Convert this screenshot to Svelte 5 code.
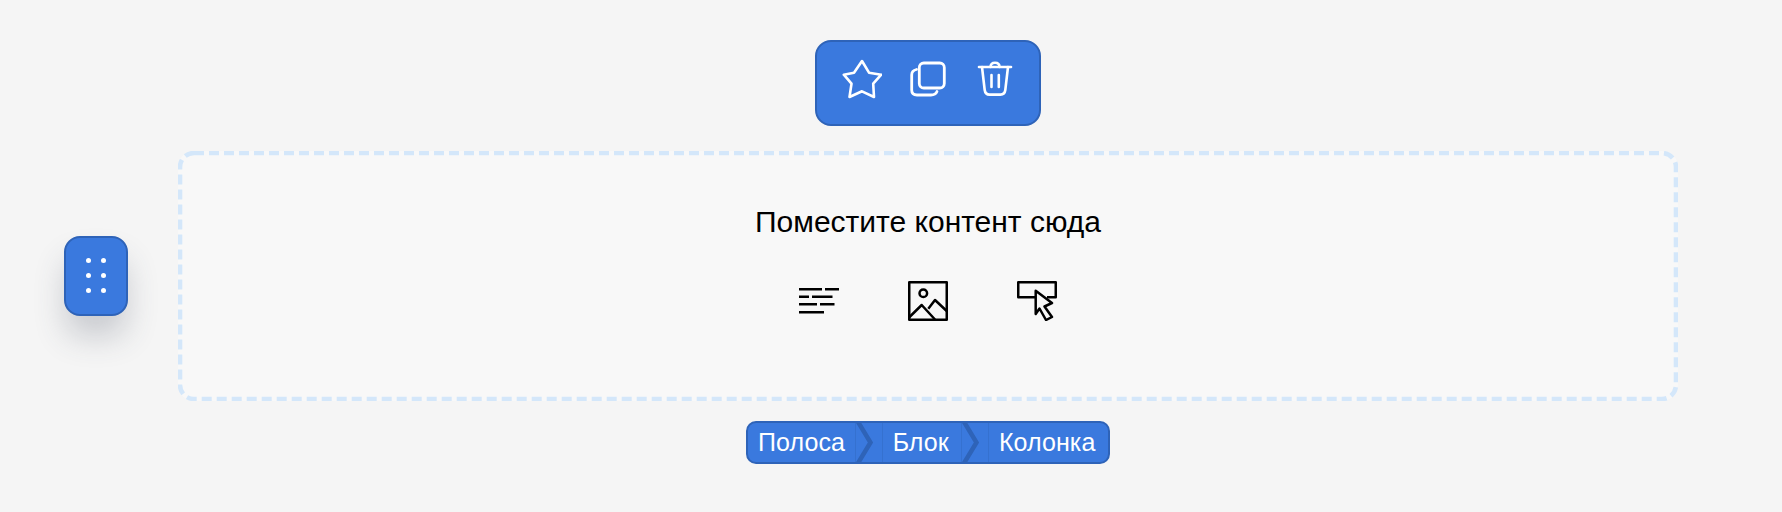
<script>
  const crumbs = ['Полоса', 'Блок', 'Колонка'];
  const dots = [
    [2.5, 2.5], [17.5, 2.5],
    [2.5, 17.5], [17.5, 17.5],
    [2.5, 32.5], [17.5, 32.5]
  ];
</script>

<div class="page">
  <button class="handle" aria-label="Переместить">
    <svg width="20" height="35" viewBox="0 0 20 35" fill="#fff">
      {#each dots as [cx, cy]}
        <circle {cx} {cy} r="2.5" />
      {/each}
    </svg>
  </button>

  <div class="main">
    <div class="toolbar">
      <svg width="40" height="40" viewBox="0 0 40 40" fill="none" stroke="#fff" stroke-width="2.6" stroke-linejoin="round" stroke-linecap="round">
        <path d="M20 2 L27 13.7 L39.2 15.7 L31.2 24.7 L32 38 L20 32.3 L7.5 38 L9.5 24.7 L1.8 15.7 L12 13.7 Z" />
      </svg>
      <svg width="40" height="40" viewBox="0 0 40 40" fill="none" stroke="#fff" stroke-width="2.8" stroke-linecap="round">
        <rect x="11.3" y="4" width="25" height="25" rx="4.5" />
        <path d="M8.5 10.5 Q3.7 11.5 3.7 16 V31 Q3.7 36 9 36 H23 Q27.5 36 29 32.5" />
      </svg>
      <svg width="40" height="40" viewBox="0 0 40 40" fill="none" stroke="#fff" stroke-width="2.6" stroke-linecap="round" stroke-linejoin="round">
        <path d="M4 8 H36" />
        <path d="M7 8 L9.7 31 Q10.3 35.6 14.5 35.6 H25.5 Q29.7 35.6 30.3 31 L33 8" />
        <path d="M15.5 8 Q15.5 3.8 20 3.8 Q24.5 3.8 24.5 8" />
        <path d="M16.5 16 V28 M23.8 16 V28" />
      </svg>
    </div>

    <div class="zone">
      <svg class="dash" width="1500" height="250" viewBox="0 0 1500 250" fill="none">
        <rect x="2" y="2" width="1496" height="246" rx="14" stroke="#d4e7fa" stroke-width="4.6" stroke-dasharray="10 5" />
      </svg>
      <div class="title">Поместите контент сюда</div>
      <div class="icons">
        <svg width="40" height="40" viewBox="0 0 40 40" fill="none" stroke="#000" stroke-width="2.5">
          <path d="M0 8.3 H23 M26 8.3 H40 M0 15.7 H10 M13 15.7 H33.5 M0 23.3 H18 M21 23.3 H35.5 M0 31.3 H25" />
        </svg>
        <svg width="40" height="40" viewBox="0 0 40 40" fill="none" stroke="#000" stroke-width="2.5" stroke-linejoin="round">
          <rect x="1.25" y="1.25" width="37.5" height="37.5" />
          <circle cx="15.3" cy="12.3" r="3.8" />
          <path d="M1 36.5 L13.7 24 L27 38.5 M20.3 27.7 L27 19 L38.7 30" />
        </svg>
        <svg width="40" height="40" viewBox="0 0 40 40" fill="none" stroke="#000" stroke-width="2.5" stroke-linejoin="round">
          <path d="M18 16.3 H1.25 V1.25 H38.75 V16.3 H30" />
          <path d="M18.7 9.7 L35 22 L27.5 25.5 L35 36 L29 39 L22.5 27.5 L18.7 33 Z" fill="#f8f8f8" />
        </svg>
      </div>
    </div>

    <nav class="crumbs">
      {#each crumbs as crumb, i}
        {#if i > 0}
          <span class="sep">
            <svg width="18" height="39" viewBox="0 0 18 39">
              <path d="M1.5 -2 L14.5 19.5 L1.5 41" fill="none" stroke="#2e63b8" stroke-width="4.5" />
            </svg>
          </span>
        {/if}
        <span class="crumb">{crumb}</span>
      {/each}
    </nav>
  </div>
</div>

<style>
  :global(body) {
    margin: 0;
    background: #f5f5f5;
  }

  .page {
    display: flex;
    align-items: flex-start;
    gap: 50px;
    height: 512px;
    padding: 40px 0 0 64px;
    box-sizing: border-box;
    font-family: "Liberation Sans", Arial, sans-serif;
  }

  .handle {
    flex: none;
    display: flex;
    align-items: center;
    justify-content: center;
    width: 64px;
    height: 80px;
    margin-top: 196px;
    padding: 0 0 2px;
    box-sizing: border-box;
    background: #3a79de;
    border: 2px solid #2e63b8;
    border-radius: 16px;
    box-shadow: 0 22px 32px -2px rgba(60, 66, 87, 0.24);
  }

  .main {
    width: 1500px;
    display: flex;
    flex-direction: column;
    align-items: center;
  }

  .toolbar {
    display: flex;
    align-items: center;
    justify-content: center;
    gap: 26.5px;
    width: 226px;
    height: 86px;
    padding-bottom: 8px;
    box-sizing: border-box;
    background: #3a79de;
    border: 2px solid #2e63b8;
    border-radius: 16px;
  }

  .zone {
    position: relative;
    width: 100%;
    height: 250px;
    margin-top: 25px;
    box-sizing: border-box;
    background: #f8f8f8;
    border-radius: 16px;
    display: flex;
    flex-direction: column;
    align-items: center;
    padding-top: 55px;
  }

  .dash {
    position: absolute;
    inset: 0;
    pointer-events: none;
  }

  .title {
    font-size: 30px;
    line-height: 32px;
    color: #000;
  }

  .icons {
    display: flex;
    gap: 69px;
    margin-top: 43px;
  }

  .crumbs {
    display: flex;
    align-items: stretch;
    height: 43px;
    margin-top: 20px;
    box-sizing: border-box;
    background: #3a79de;
    border: 2px solid #2e63b8;
    border-radius: 10px;
    color: #fff;
    font-size: 25px;
    letter-spacing: 0.1px;
    overflow: hidden;
  }

  .crumb {
    display: flex;
    align-items: center;
    padding: 0 12.5px 0 9.5px;
  }

  .crumb:first-child {
    padding: 0 10px;
  }

  .sep {
    flex: none;
    box-sizing: border-box;
    width: 28px;
    border-left: 1px solid rgba(46, 99, 184, 0.35);
    border-right: 1px solid rgba(46, 99, 184, 0.35);
  }

  .sep svg {
    display: block;
    overflow: visible;
  }
</style>
